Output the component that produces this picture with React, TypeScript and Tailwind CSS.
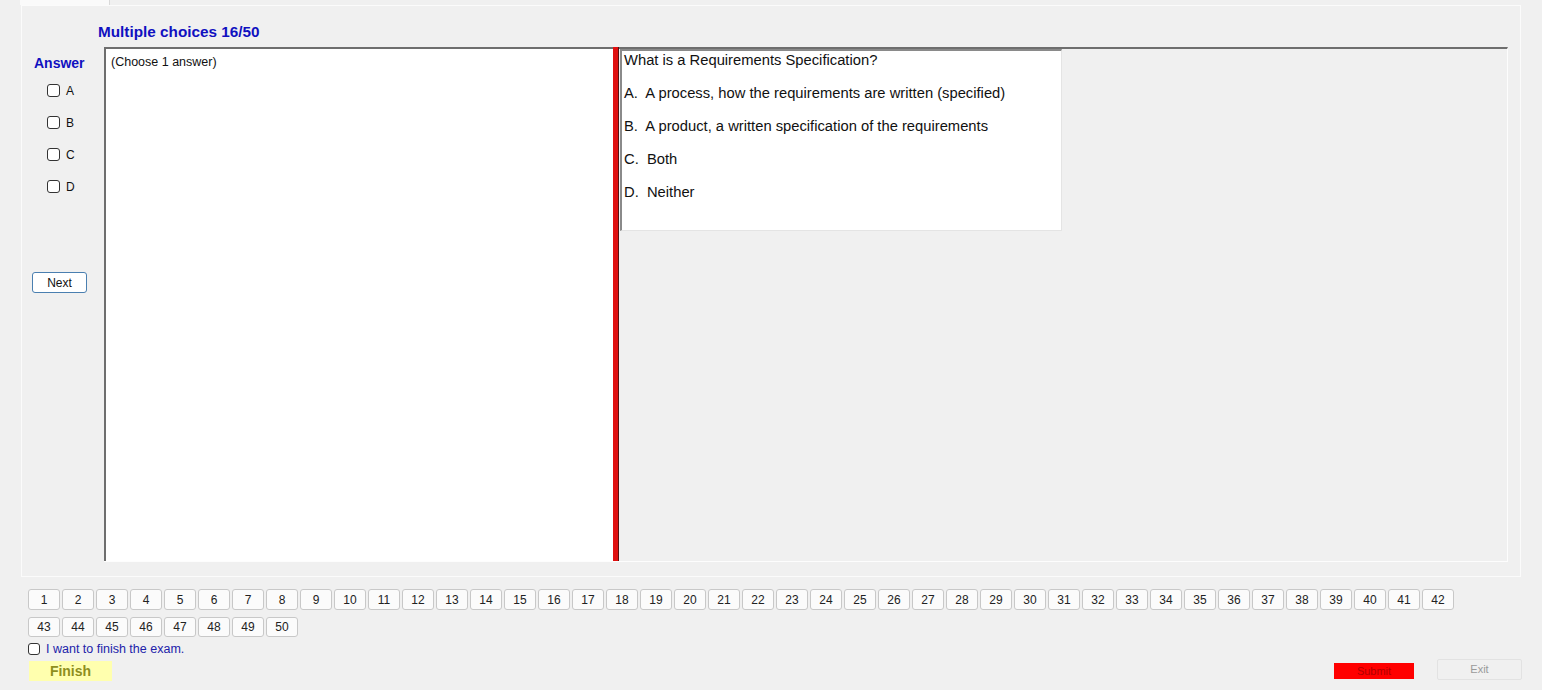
import React from "react";

const font = { fontFamily: '"Liberation Sans", Arial, sans-serif' };

function Check({ label }: { label: string }) {
  return (
    <div className="flex items-center h-[13px] gap-[6px]">
      <div className="w-[13px] h-[13px] rounded-[3px] border border-[#333] bg-white" />
      <span className="text-[12px] text-[#111] leading-none">{label}</span>
    </div>
  );
}

function NumBtn({ n, h }: { n: number; h: string }) {
  return (
    <div
      className={`w-[32px] ${h} flex items-center justify-center rounded-[3px] border border-[#c8c8c8] bg-[#fbfbfb] text-[12px] text-[#222] leading-none`}
    >
      {n}
    </div>
  );
}

export default function App() {
  const row1 = Array.from({ length: 42 }, (_, i) => i + 1);
  const row2 = Array.from({ length: 8 }, (_, i) => i + 43);
  return (
    <div className="w-[1542px] h-[690px] bg-[#f0f0f0] overflow-hidden" style={font}>
      {/* tab strip */}
      <div className="h-[5px] flex">
        <div className="ml-[20px] w-[90px] h-[5px] bg-[#fafafa] border-r border-[#d9d9d9]" />
      </div>
      {/* tab page */}
      <div className="ml-[21px] w-[1500px] h-[572px] border border-[#fbfbfb] bg-[#f0f0f0] flex flex-col">
        <div className="h-[41px] pl-[76px] pt-[18px] leading-none">
          <span className="text-[15.3px] font-bold text-[#1010c0] leading-none">Multiple choices 16/50</span>
        </div>
        <div className="flex h-[515px]">
          {/* left column */}
          <div className="w-[82px] flex flex-col">
            <div className="pl-[12px] pt-[9px] text-[14px] font-bold text-[#1010c0] leading-none">Answer</div>
            <div className="pl-[25px] pt-[14px] flex flex-col gap-[19px]">
              <Check label="A" />
              <Check label="B" />
              <Check label="C" />
              <Check label="D" />
            </div>
            <div className="pl-[10px] pt-[79px]">
              <div className="w-[55px] h-[21px] rounded-[3px] border border-[#4a7fb0] bg-white flex items-center justify-center text-[12px] text-[#111] leading-none">
                Next
              </div>
            </div>
          </div>
          {/* main area */}
          <div className="w-[1404px] flex border-b border-[#fdfdfd]">
            <div className="w-[509px] bg-white border-t-2 border-l-2 border-[#6e6e6e] pl-[5px] pt-[4px] leading-none">
              <span className="text-[12.5px] text-[#111] leading-none">(Choose 1 answer)</span>
            </div>
            <div className="w-[6px] bg-[#e01010] border-r border-[#5a1010]" />
            <div className="flex-1 border-t-2 border-[#6e6e6e] border-r border-r-[#fdfdfd] pl-[1px]">
              <div className="w-[442px] h-[182px] bg-white border-l-2 border-t-2 border-[#8a8a8a] border-r border-b border-r-[#e4e4e4] border-b-[#e4e4e4] pl-[2px] flex flex-col gap-[15px]">
                <div className="text-[14.75px] text-[#111] leading-[18px] whitespace-pre">What is a Requirements Specification?</div>
                <div className="text-[14.75px] text-[#111] leading-[18px] whitespace-pre">A.  A process, how the requirements are written (specified)</div>
                <div className="text-[14.75px] text-[#111] leading-[18px] whitespace-pre">B.  A product, a written specification of the requirements</div>
                <div className="text-[14.75px] text-[#111] leading-[18px] whitespace-pre">C.  Both</div>
                <div className="text-[14.75px] text-[#111] leading-[18px] whitespace-pre">D.  Neither</div>
              </div>
            </div>
          </div>
        </div>
      </div>
      {/* number buttons */}
      <div className="pl-[28px] pt-[12px] flex gap-[2px]">
        {row1.map((n) => (
          <NumBtn key={n} n={n} h="h-[21px]" />
        ))}
      </div>
      <div className="pl-[28px] pt-[7px] flex gap-[2px]">
        {row2.map((n) => (
          <NumBtn key={n} n={n} h="h-[20px]" />
        ))}
      </div>
      <div className="pl-[28px] pt-[5px] flex items-center gap-[6px] h-[19px]">
        <div className="w-[12px] h-[12px] rounded-[3px] border border-[#333] bg-white" />
        <span className="text-[12.5px] text-[#2222aa] leading-none">I want to finish the exam.</span>
      </div>
      <div className="flex items-start pt-[3px] h-[30px]">
        <div className="ml-[29px] mt-[2px] w-[83px] h-[20px] bg-[#ffffae] flex items-center justify-center text-[14px] font-bold text-[#8e8e1e] leading-none">
          Finish
        </div>
        <div className="flex-1" />
        <div className="mt-[4px] w-[80px] h-[16px] bg-[#ff0000] flex items-center justify-center text-[11px] text-[#b00000] leading-none">
          Submit
        </div>
        <div className="ml-[23px] mr-[20px] w-[85px] h-[21px] rounded-[2px] border border-[#e2e2e2] bg-[#f0f0f0] flex items-center justify-center text-[11px] text-[#9a9a9a] leading-none">
          Exit
        </div>
      </div>
    </div>
  );
}
